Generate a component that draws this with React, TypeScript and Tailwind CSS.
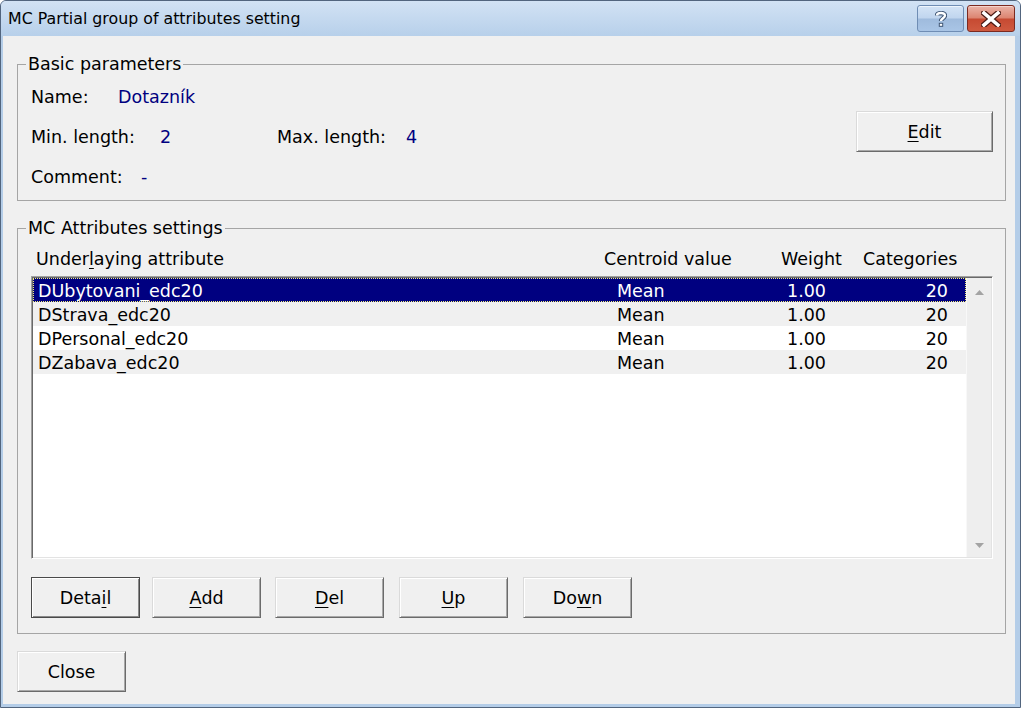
import React from "react";

interface AttributeRow {
  name: string;
  centroid: string;
  weight: string;
  categories: string;
}

const rows: AttributeRow[] = [
  { name: "DUbytovani_edc20", centroid: "Mean", weight: "1.00", categories: "20" },
  { name: "DStrava_edc20", centroid: "Mean", weight: "1.00", categories: "20" },
  { name: "DPersonal_edc20", centroid: "Mean", weight: "1.00", categories: "20" },
  { name: "DZabava_edc20", centroid: "Mean", weight: "1.00", categories: "20" },
];

// underlined access-key letter
function U({ children }: { children: React.ReactNode }) {
  return <span className="underline decoration-1 underline-offset-[3px]">{children}</span>;
}

interface WinButtonProps {
  children: React.ReactNode;
  className?: string;
  isDefault?: boolean;
}

function WinButton({ children, className = "", isDefault = false }: WinButtonProps) {
  const frame = isDefault
    ? "border-[#4a4a4a] shadow-[inset_1px_1px_0_#fff,inset_-1px_-1px_0_#8a8a8a]"
    : "border-t-[#dadada] border-l-[#dadada] border-r-[#6b6b6b] border-b-[#6b6b6b] shadow-[inset_1px_1px_0_#fff,inset_-1px_-1px_0_#a8a8a8]";
  return (
    <button
      type="button"
      className={`flex h-[41px] items-center justify-center border bg-[#f0f0f0] text-black ${frame} ${className}`}
    >
      {children}
    </button>
  );
}

function TitleButtons() {
  return (
    <div className="flex items-start pt-[4px]">
      <div className="flex h-[27px] w-[47px] items-center justify-center rounded-[3px] border border-[#6f8db4] bg-[linear-gradient(to_bottom,#d4e4f6_0%,#c0d5ee_48%,#9fbbdd_52%,#a9c5e6_100%)] shadow-[inset_0_1px_0_#eef5fc]">
        <svg width="12" height="16" viewBox="0 0 12 16">
          <path
            d="M2 4.5 C2 1.5 10 1 10 4.5 C10 7 6 7.5 6 10"
            fill="none"
            stroke="#3f5675"
            strokeWidth="4.4"
          />
          <rect x="3.8" y="11.8" width="4.4" height="4" fill="#3f5675" />
          <path d="M2 4.5 C2 1.5 10 1 10 4.5 C10 7 6 7.5 6 10" fill="none" stroke="#fff" strokeWidth="2.4" />
          <rect x="4.8" y="12.8" width="2.4" height="2" fill="#fff" />
        </svg>
      </div>
      <div className="ml-[3px] flex h-[27px] w-[48px] items-center justify-center rounded-[3px] border border-[#7c2a20] bg-[linear-gradient(to_bottom,#eab4a8_0%,#dc8470_48%,#c64a32_52%,#cf5a40_100%)] shadow-[inset_0_1px_0_#f6d4cc]">
        <svg width="20" height="16" viewBox="0 0 20 16">
          <path d="M3 2 L17 14 M17 2 L3 14" stroke="#4a1a14" strokeWidth="6" strokeLinecap="square" />
          <path d="M3 2 L17 14 M17 2 L3 14" stroke="#fff" strokeWidth="3.6" strokeLinecap="square" />
        </svg>
      </div>
    </div>
  );
}

function ScrollArrow({ up }: { up: boolean }) {
  return (
    <svg width="9" height="5" viewBox="0 0 9 5">
      <path d={up ? "M0 5 L4.5 0 L9 5 Z" : "M0 0 L4.5 5 L9 0 Z"} fill="#a3a3a3" />
    </svg>
  );
}

export default function App() {
  return (
    <div className="flex h-[708px] w-[1021px] flex-col overflow-hidden rounded-t-[6px] border border-[#52657e] bg-[#b4cde8] font-['DejaVu_Sans',sans-serif] text-[17.5px] leading-[20px] text-black">
      {/* title bar */}
      <div className="flex h-[35px] justify-between bg-gradient-to-b from-[#d2e2f4] to-[#b7d0ea] pr-[5px]">
        <div className="flex items-center pl-[7px] pt-[1px] text-[15.8px]">
          MC Partial group of attributes setting
        </div>
        <TitleButtons />
      </div>

      {/* client area */}
      <div className="mb-[3px] ml-[2px] mr-[5px] flex flex-1 flex-col items-start bg-[#f0f0f0] pl-[14px] pr-[9px] pt-[18px]">
        <fieldset className="w-full border border-[#a5a5a5] px-0 pb-[3px] pt-[3px]">
          <legend className="ml-[8px] px-[2px] leading-[20px]">Basic parameters</legend>
          <div className="flex justify-between">
            <div className="flex flex-col pl-[13px]">
              <div className="flex h-[40px] items-center">
                <span className="w-[87px]">Name:</span>
                <span className="text-[#000080]">Dotazník</span>
              </div>
              <div className="flex h-[40px] items-center">
                <span className="w-[129px]">Min. length:</span>
                <span className="w-[117px] text-[#000080]">2</span>
                <span className="w-[129px]">Max. length:</span>
                <span className="text-[#000080]">4</span>
              </div>
              <div className="flex h-[40px] items-center">
                <span className="w-[110px]">Comment:</span>
                <span className="text-[#000080]">-</span>
              </div>
            </div>
            <WinButton className="mr-[12px] mt-[34px] w-[137px]">
              <U>E</U>dit
            </WinButton>
          </div>
        </fieldset>

        <fieldset className="mt-[17px] w-full border border-[#a5a5a5] px-0 pb-[15px] pt-0">
          <legend className="ml-[8px] px-[2px] leading-[20px]">MC Attributes settings</legend>
          <div className="flex h-[38px] items-end pb-[7px] pl-[18px]">
            <span className="w-[568px]">
              Under<U>l</U>aying attribute
            </span>
            <span className="w-[177px]">Centroid value</span>
            <span className="w-[82px]">Weight</span>
            <span>Categories</span>
          </div>

          <div className="ml-[13px] flex h-[283px] w-[962px] border border-b-white border-l-[#a0a0a0] border-r-white border-t-[#a0a0a0] bg-white p-[1px] shadow-[inset_1px_1px_0_#696969,inset_-1px_-1px_0_#e3e3e3]">
            <div className="flex flex-1 flex-col">
              {rows.map((row, i) => {
                const selected = i === 0;
                const rowClass = selected
                  ? "bg-[#000080] text-white outline-1 outline-dotted outline-[#f7f27a] -outline-offset-1"
                  : i % 2 === 1
                    ? "bg-[#f0f0f0]"
                    : "bg-white";
                return (
                  <div key={row.name} className={`flex h-[24px] items-center pr-[18px] pt-[1px] ${rowClass}`}>
                    <span className="w-[584px] pl-[5px]">{row.name}</span>
                    <span className="w-[170px]">{row.centroid}</span>
                    <span>{row.weight}</span>
                    <span className="flex-1 text-right">{row.categories}</span>
                  </div>
                );
              })}
            </div>
            <div className="flex w-[25px] flex-col items-center justify-between border-l border-[#f8f8f8] bg-[#eeeeee] pb-[9px] pt-[12px]">
              <ScrollArrow up />
              <ScrollArrow up={false} />
            </div>
          </div>

          <div className="ml-[13px] mt-[18px] flex">
            <WinButton isDefault className="w-[109px]">
              Deta<U>i</U>l
            </WinButton>
            <WinButton className="ml-[12px] w-[109px]">
              <U>A</U>dd
            </WinButton>
            <WinButton className="ml-[14px] w-[109px]">
              <U>D</U>el
            </WinButton>
            <WinButton className="ml-[15px] w-[109px]">
              <U>U</U>p
            </WinButton>
            <WinButton className="ml-[15px] w-[109px]">
              Do<U>w</U>n
            </WinButton>
          </div>
        </fieldset>

        <WinButton className="mt-[17px] w-[109px]">Close</WinButton>
      </div>
    </div>
  );
}
